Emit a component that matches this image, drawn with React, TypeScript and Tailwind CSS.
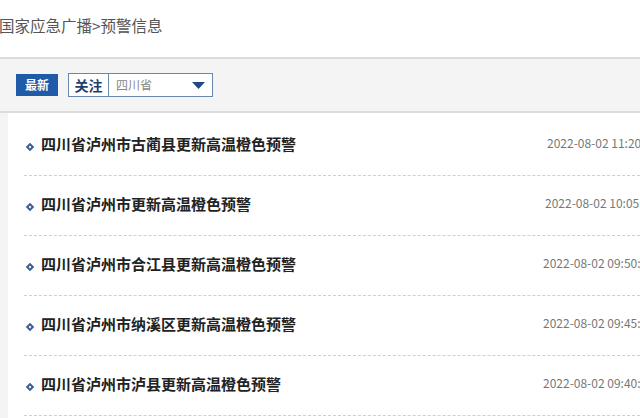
import React from 'react';

const items = [
  { title: '四川省泸州市古蔺县更新高温橙色预警', time: '2022-08-02 11:20:37', left: 'pl-[547px]' },
  { title: '四川省泸州市更新高温橙色预警', time: '2022-08-02 10:05:12', left: 'pl-[545px]' },
  { title: '四川省泸州市合江县更新高温橙色预警', time: '2022-08-02 09:50:44', left: 'pl-[543px]' },
  { title: '四川省泸州市纳溪区更新高温橙色预警', time: '2022-08-02 09:45:08', left: 'pl-[543px]' },
  { title: '四川省泸州市泸县更新高温橙色预警', time: '2022-08-02 09:40:21', left: 'pl-[543px]' },
];

const font = { fontFamily: '"Noto Sans CJK SC", "Liberation Sans", sans-serif' };

const App: React.FC = () => {
  return (
    <div className="w-[640px] h-[418px] overflow-hidden bg-white" style={font}>
      {/* 面包屑 */}
      <div className="h-[57px] pt-[14px] text-[15.5px] leading-[22px] text-[#555] -ml-[1px]">
        国家应急广播&gt;预警信息
      </div>

      {/* 筛选栏 */}
      <div className="h-[56px] bg-[#f4f4f4] border-t-2 border-b-2 border-[#dcdcdc] flex items-center pl-4 gap-[10px]">
        <button className="w-[42px] h-[22px] bg-[#1f5ba8] text-white text-[12px] font-bold leading-none">
          最新
        </button>
        <div className="h-[24px] w-[145px] bg-white border border-[#6a88ad] flex items-center">
          <span className="w-[40px] h-full flex items-center justify-center text-[14px] font-bold text-[#1f3f6e] border-r border-[#6a88ad]">
            关注
          </span>
          <span className="flex-1 pl-[7px] text-[12px] text-[#888]">四川省</span>
          <svg width="13" height="7" viewBox="0 0 13 7" className="mr-[7px]">
            <polygon points="0,0 13,0 6.5,7" fill="#1f4a85" />
          </svg>
        </div>
      </div>

      {/* 列表 */}
      <div className="flex">
        <div className="w-[8px] shrink-0 bg-[#f4f4f4] h-[320px]" />
        <ul className="flex-1 pl-[16px] pt-[3px]">
          {items.map((it, i) => (
            <li
              key={i}
              className="h-[60px] border-b border-dashed border-[#cfcfcf] whitespace-nowrap relative"
            >
              <span className="absolute left-[3px] top-[28px] w-[6px] h-[6px] border-2 border-[#3a5e93] rotate-45" />
              <span className="absolute left-[17px] text-[15px] font-bold text-[#222] leading-none top-[20px]">
                {it.title}
              </span>
              <span className={`absolute left-0 top-[21px] text-[12px] text-[#777] leading-none ${it.left}`}>
                <span className="-ml-[24px]">{it.time}</span>
              </span>
            </li>
          ))}
        </ul>
      </div>
    </div>
  );
};

export default App;
